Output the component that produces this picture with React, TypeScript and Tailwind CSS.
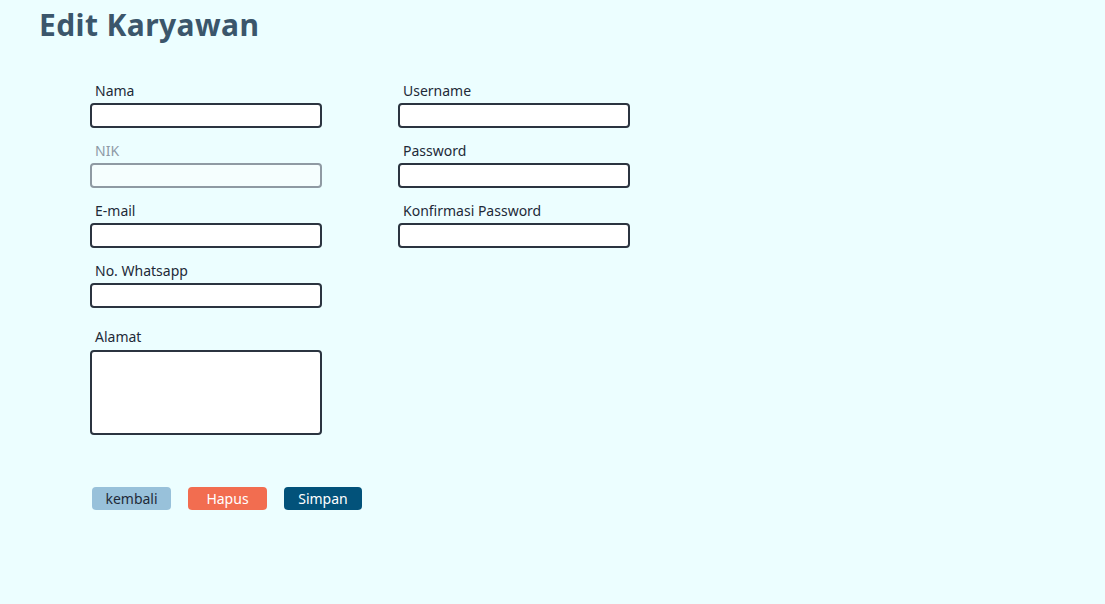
import React from "react";

function Field({ label, disabled, textarea }: { label: string; disabled?: boolean; textarea?: boolean }) {
  return (
    <div className="flex flex-col">
      <label className={`pl-[5px] text-[14px] leading-5 ${disabled ? "text-[#8e9aa6]" : "text-[#1e2a38]"}`}>{label}</label>
      {textarea ? (
        <textarea className="mt-[3px] h-[85px] w-[232px] resize-none rounded-[4px] border-2 border-[#2b3440] bg-white" />
      ) : (
        <input
          disabled={disabled}
          className={`mt-[2px] h-[25px] w-[232px] rounded-[4px] border-2 ${disabled ? "border-[#8f9aa3] bg-[#f5fefe]" : "border-[#2b3440] bg-white"}`}
        />
      )}
    </div>
  );
}

export default function App() {
  return (
    <div className="min-h-[604px] bg-[#ecfeff] font-['Noto_Sans',sans-serif]">
      <h1 className="pl-[39px] pt-[5px] text-[30px] font-bold leading-10 tracking-[0.4px] text-[#3b566b]">Edit Karyawan</h1>

      <div className="mt-[36px] flex gap-[76px] pl-[90px]">
        <div className="flex flex-col gap-[13px]">
          <Field label="Nama" />
          <Field label="NIK" disabled />
          <Field label="E-mail" />
          <Field label="No. Whatsapp" />
          <div className="mt-[6px]">
            <Field label="Alamat" textarea />
          </div>
        </div>
        <div className="flex flex-col gap-[13px]">
          <Field label="Username" />
          <Field label="Password" />
          <Field label="Konfirmasi Password" />
        </div>
      </div>

      <div className="mt-[52px] flex gap-[17px] pl-[92px]">
        <button className="h-[23px] w-[79px] rounded-[4px] bg-[#98c1da] text-[14px] text-[#1e2a38]">kembali</button>
        <button className="h-[23px] w-[79px] rounded-[4px] bg-[#f26d50] text-[14px] text-white">Hapus</button>
        <button className="h-[23px] w-[78px] rounded-[4px] bg-[#02527a] text-[14px] text-white">Simpan</button>
      </div>
    </div>
  );
}
